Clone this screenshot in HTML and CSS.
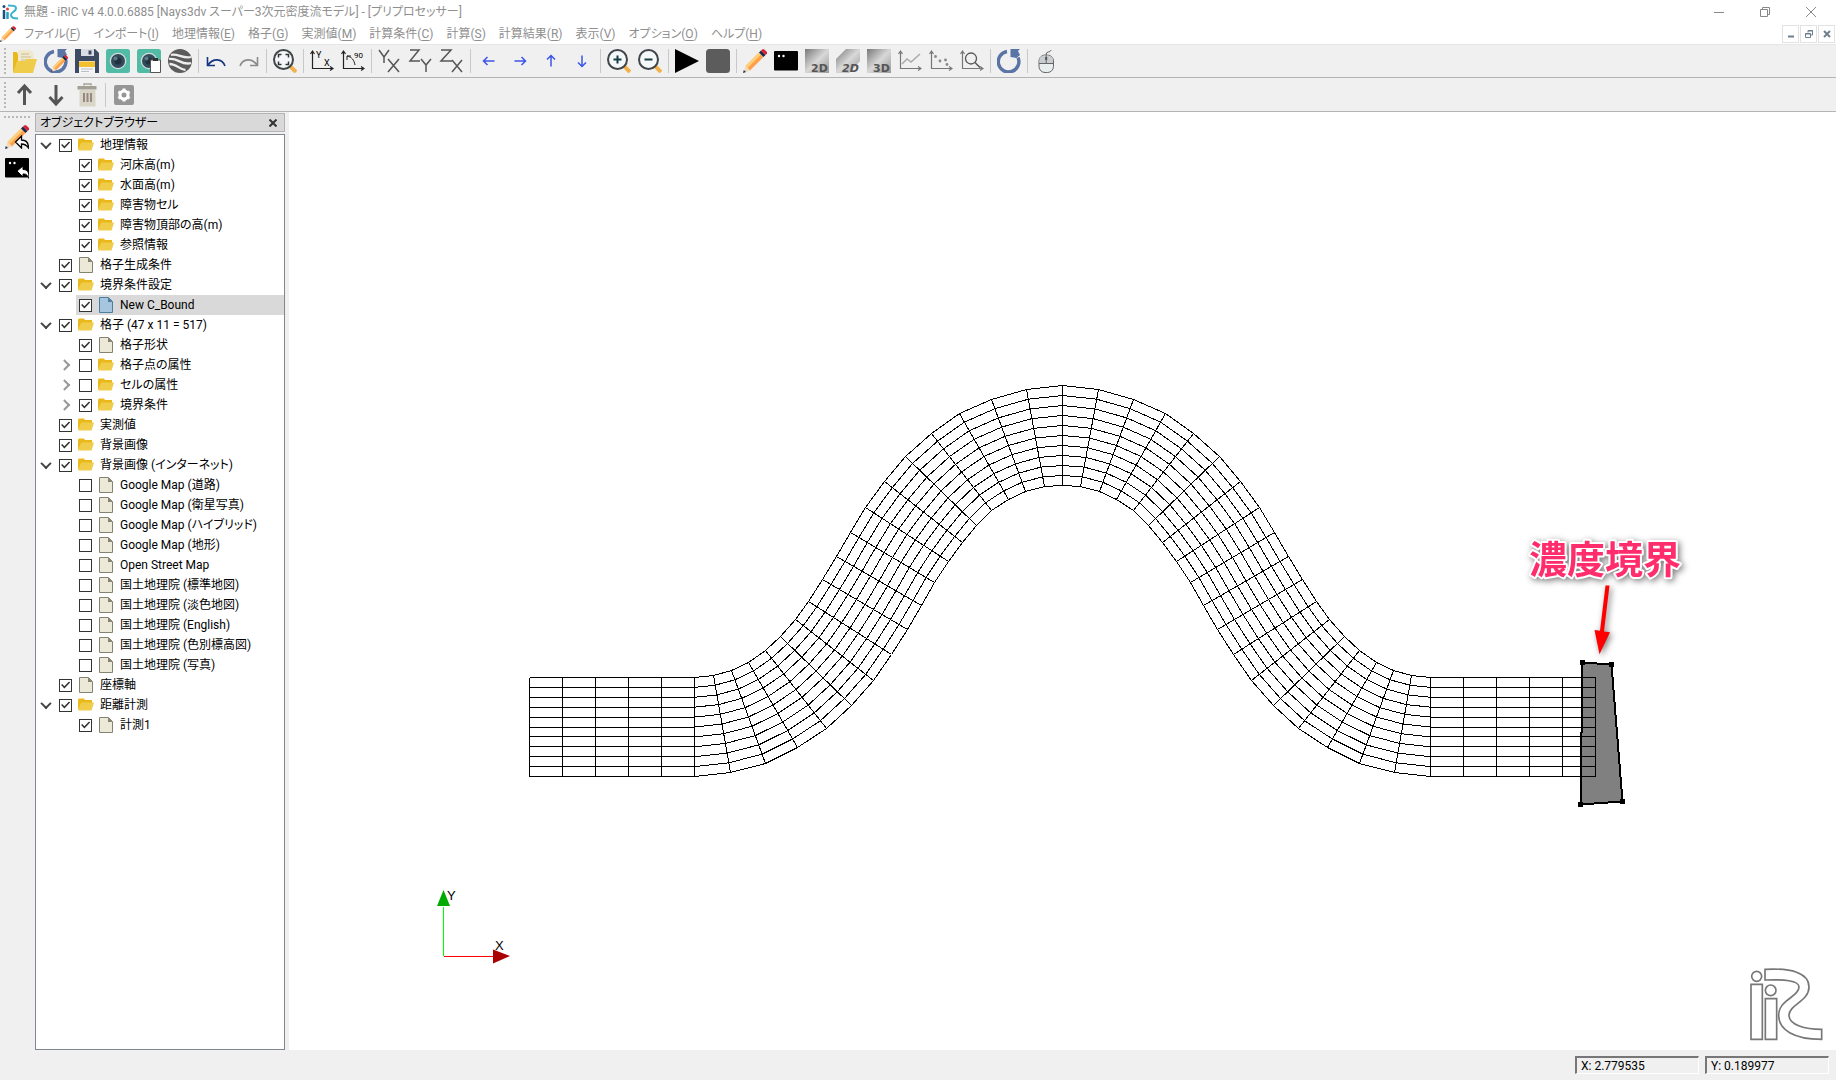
FILE: index.html
```
<!DOCTYPE html>
<html lang="ja">
<head>
  <meta charset="UTF-8">
  <title>無題 - iRIC v4 4.0.0.6885</title>
  <meta name="viewport" content="width=device-width, initial-scale=1.0">
  <link rel="stylesheet" href="styles.css">
</head>
<body>
  <!-- shared icons -->
  <svg class="defs" width="0" height="0" aria-hidden="true">
    <linearGradient id="steel" x1="0" y1="0" x2="1" y2="1">
      <stop offset="0" stop-color="#777"/>
      <stop offset=".5" stop-color="#d8d8d8"/>
      <stop offset="1" stop-color="#999"/>
    </linearGradient>
    <symbol id="folder" viewBox="0 0 16 16">
      <path d="M0 2.500 1 1.500h5l1 1.500h7V6H4L0 13z" fill="#e9b81c"/>
      <path d="M3.200 5.500H16l-2.500 8H0z" fill="#efcd4b"/>
    </symbol>
    <symbol id="file" viewBox="0 0 16 16">
      <path d="M1.500.5h9l4 4v11h-13z" fill="var(--paper, #ece9d8)" stroke="var(--ink, #85826f)"/>
      <path d="M10 .5v4.500h4.500z" fill="var(--ink, #85826f)"/>
    </symbol>
    <symbol id="pencil" viewBox="0 0 24 24">
      <path d="M16 3.500 20.500 8 7 21.500 2.500 17z" fill="#ffa04a"/>
      <path d="M16 3.500 18 5.500 4.500 19 2.500 17z" fill="#ffd07a"/>
      <path d="M2.500 17 7 21.500.5 24z" fill="#f3d9b8"/>
      <path d="M.8 21 3 23 0 24z" fill="#1b3557"/>
      <path d="m16 3.500 2-2L22.500 6l-2 2z" fill="#16294a"/>
      <path d="m18 1.500 1.500-1.300h1.500L24 3v1.500L22.500 6z" fill="#d81f33"/>
    </symbol>
    <symbol id="console" viewBox="0 0 24 24">
      <rect y="2" width="24" height="19.500" rx="1" fill="#000"/>
      <circle cx="5" cy="7" r="1.200" fill="#fff"/>
      <circle cx="9.500" cy="7" r="1.200" fill="#fff"/>
    </symbol>
    <symbol id="refresh" viewBox="0 0 24 24">
      <path d="M10 2.500A10.300 10.300 0 1 0 21 8.500" fill="none" stroke="#5a74a6" stroke-width="3.400"/>
      <path d="M13.500 0H23l-2 2 2 4-3.500 3-6-1z" fill="#5a74a6"/>
    </symbol>
    <symbol id="camera" viewBox="0 0 24 24">
      <rect width="24" height="24" rx="2.500" fill="#52bba6"/>
      <circle cx="12" cy="12" r="8.300" fill="#d5dce0"/>
      <circle cx="12" cy="12" r="7" fill="#324a5a"/>
      <circle cx="12" cy="12" r="3.500" fill="#20323f"/>
      <circle cx="9.500" cy="9.500" r="2" fill="#607887"/>
    </symbol>
    <symbol id="lens" viewBox="0 0 24 24">
      <path d="m17 17 6 6" stroke="#f3b14e" stroke-width="4"/>
      <circle cx="10.500" cy="10.500" r="9.500" fill="#f5f8f8" stroke="#3f4548" stroke-width="2"/>
    </symbol>
    <symbol id="axes" viewBox="0 0 24 24">
      <path d="M2.500 3v16.500H22M.5 5l2-3 2 3M20 17.500l3 2-3 2" fill="none" stroke="currentColor" stroke-width="1.200"/>
    </symbol>
  </svg>

  <header>
    <div class="titlebar">
      <svg class="app-icon" viewBox="0 0 16 16"><g fill="none" stroke-width="2.500"><path d="M2 6v9" stroke="#1b4f82"/><path d="M5.500 8v7" stroke="#27a3c2"/><path d="M6 1.500c5 0 8 0 8 3S9 8 9 11s3 3.500 7 3.500" stroke="#38b2ce" stroke-width="2"/></g><circle cx="2" cy="2.500" r="1.500" fill="#1b4f82"/><circle cx="5.500" cy="5" r="1.500" fill="#e03c3c"/></svg>
      <span class="title">無題 - iRIC v4 4.0.0.6885 [Nays3dv スーパー3次元密度流モデル] - [プリプロセッサー]</span>
      <div class="window-buttons">
        <button aria-label="最小化"><svg viewBox="0 0 10 10"><path d="M0 5.500h10"/></svg></button>
        <button aria-label="元に戻す"><svg viewBox="0 0 10 10"><path d="M.5 2.500h7v7h-7zM2.500 2.500v-2h7v7h-2"/></svg></button>
        <button aria-label="閉じる"><svg viewBox="0 0 10 10"><path d="m0 0 10 10M10 0 0 10"/></svg></button>
      </div>
    </div>

    <nav class="menubar">
      <svg class="menu-icon"><use href="#pencil"/></svg>
      <button>ファイル(<u>F</u>)</button>
      <button>インポート(<u>I</u>)</button>
      <button>地理情報(<u>E</u>)</button>
      <button>格子(<u>G</u>)</button>
      <button>実測値(<u>M</u>)</button>
      <button>計算条件(<u>C</u>)</button>
      <button>計算(<u>S</u>)</button>
      <button>計算結果(<u>R</u>)</button>
      <button>表示(<u>V</u>)</button>
      <button>オプション(<u>O</u>)</button>
      <button>ヘルプ(<u>H</u>)</button>
      <div class="mdi-buttons">
        <button aria-label="子ウィンドウを最小化"><svg viewBox="0 0 8 8"><path d="M1 6.500h6" stroke-width="2"/></svg></button>
        <button aria-label="子ウィンドウを元に戻す"><svg viewBox="0 0 8 8"><path d="M.5 3.500h5v4h-5zM0 4h6M3 2.500V.5h4.500v4.500H6M3 1h5"/></svg></button>
        <button aria-label="子ウィンドウを閉じる"><svg viewBox="0 0 8 8"><path d="m1 1 6 6M7 1 1 7" stroke-width="2"/></svg></button>
      </div>
    </nav>
  </header>

  <div class="toolbar">
    <span class="grip"></span>
    <button aria-label="開く"><svg viewBox="0 0 24 24"><path d="M0 3h4l1 3v17H0z" fill="#e9b81c"/><path d="M5 1h12l4 3v13H5z" fill="#f0e9cf"/><path d="M8 5h8M8 8h10M8 11h10" stroke="#c9bd91"/><path d="M4 12h8l2-2h10l-4 14H0z" fill="#efcd4b"/></svg></button>
    <button aria-label="再読込"><svg viewBox="0 0 24 24"><use href="#refresh"/><use href="#pencil" x="7" y="6" width="17" height="17"/></svg></button>
    <button aria-label="保存"><svg viewBox="0 0 24 24"><path d="M0 0h20l4 4v20H0z" fill="#3d4a63"/><path d="M6 0h13v7H6z" fill="#d9dee3"/><path d="M13.500 1.500h3v4h-3z" fill="#3d4a63"/><path d="M4 12h16v12H4z" fill="#f5f5f5"/><path d="M4 12.500h16v5.500H4z" fill="#f3c02f"/><path d="M6 20h12M6 22.500h8" stroke="#b9bec6"/></svg></button>
    <button aria-label="スナップショット"><svg><use href="#camera"/></svg></button>
    <button aria-label="スナップショットをコピー"><svg viewBox="0 0 24 24"><use href="#camera"/><path d="M13.500 11h10v12.500h-10z" fill="#fff" stroke="#555"/><path d="M16 9h5v3h-5z" fill="#333"/></svg></button>
    <button aria-label="Google Earth"><svg viewBox="0 0 24 24"><circle cx="12" cy="12" r="12" fill="#5c5c5c"/><path d="M3 6c6-2 12 4 20 2M1 10c8-2 13 7 22 4M1.500 15c7 0 11 6 16 6" fill="none" stroke="#eee" stroke-width="2.300"/></svg></button>
    <span class="sep"></span>
    <button aria-label="元に戻す"><svg viewBox="0 0 24 24" fill="none" stroke="#14357f" stroke-width="1.600"><path d="M2.500 8v8.500H10M3 16C8 9 17 9 20 17"/></svg></button>
    <button aria-label="やり直し"><svg viewBox="0 0 24 24" fill="none" stroke="#8b8b8b" stroke-width="1.600"><path d="M21.500 8v8.500H14M21 16C16 9 7 9 4 17"/></svg></button>
    <span class="sep"></span>
    <button aria-label="全体表示"><svg viewBox="0 0 24 24"><use href="#lens"/><path d="M5.500 8.500v-3h3M12.500 5.500h3v3M15.500 12.500v3h-3M8.500 15.500h-3v-3" fill="none" stroke="#333" stroke-width="1.500"/></svg></button>
    <span class="sep"></span>
    <button aria-label="XY軸"><svg viewBox="0 0 24 24" color="#222"><use href="#axes"/><text x="6" y="9" font-size="9">Y</text><text x="14" y="17" font-size="9">X</text></svg></button>
    <button aria-label="90度回転"><svg viewBox="0 0 24 24" color="#222"><use href="#axes"/><path d="M6 7h4M6 7v4M6 7c5 1 7 4 8 9" fill="none" stroke="#222"/><text x="13" y="9" font-size="8">90</text></svg></button>
    <span class="sep"></span>
    <button aria-label="YX"><svg viewBox="0 0 24 24" class="plane"><path d="m1 1 5 7 5-7M6 8v6M10 10l11 13M21 10 10 23"/></svg></button>
    <button aria-label="ZY"><svg viewBox="0 0 24 24" class="plane"><path d="M1 1h9L1 12h10M12 10l5 6 5-6M17 16v7"/></svg></button>
    <button aria-label="ZX"><svg viewBox="0 0 24 24" class="plane"><path d="M1 1h10L1 12h11M12 11l10 12M22 11 12 23"/></svg></button>
    <span class="sep"></span>
    <button aria-label="左へ"><svg viewBox="0 0 24 24" class="move"><path d="M17.500 12h-11M10.500 8l-4 4 4 4"/></svg></button>
    <button aria-label="右へ"><svg viewBox="0 0 24 24" class="move"><path d="M6.500 12h11M13.500 8l4 4-4 4"/></svg></button>
    <button aria-label="上へ"><svg viewBox="0 0 24 24" class="move"><path d="M12 17.500v-11M8 10.500l4-4 4 4"/></svg></button>
    <button aria-label="下へ"><svg viewBox="0 0 24 24" class="move"><path d="M12 6.500v11M8 13.500l4 4 4-4"/></svg></button>
    <span class="sep"></span>
    <button aria-label="拡大"><svg viewBox="0 0 24 24"><use href="#lens"/><path d="M6.500 10.500h8M10.500 6.500v8" stroke="#173c44" stroke-width="2"/></svg></button>
    <button aria-label="縮小"><svg viewBox="0 0 24 24"><use href="#lens"/><path d="M6.500 10.500h8" stroke="#173c44" stroke-width="2"/></svg></button>
    <span class="sep"></span>
    <button aria-label="実行"><svg viewBox="0 0 24 24"><path d="M0 0v24l24-12z"/></svg></button>
    <button aria-label="停止"><svg viewBox="0 0 24 24"><rect width="24" height="24" rx="3.500" fill="#5c5c5c"/></svg></button>
    <span class="sep"></span>
    <button aria-label="プリプロセッサー"><svg><use href="#pencil"/></svg></button>
    <button aria-label="ソルバーコンソール"><svg><use href="#console"/></svg></button>
    <button aria-label="2D"><svg viewBox="0 0 24 24"><path d="M0 0h24v24H0z" fill="url(#steel)"/><text class="dim" x="6" y="23">2D</text></svg></button>
    <button aria-label="2D鳥瞰"><svg viewBox="0 0 24 24"><path d="M10 0h14v12L13 24H0V10z" fill="url(#steel)"/><text class="dim slant" x="6" y="23">2D</text></svg></button>
    <button aria-label="3D"><svg viewBox="0 0 24 24"><path d="M0 0h24v24H0z" fill="url(#steel)"/><text class="dim" x="6" y="23">3D</text></svg></button>
    <button aria-label="グラフ"><svg viewBox="0 0 24 24" color="#777"><use href="#axes"/><path d="m4 15 5-5 4 3 9-8" fill="none" stroke="#aaa" stroke-width="1.500"/></svg></button>
    <button aria-label="散布図"><svg viewBox="0 0 24 24" color="#777"><use href="#axes"/><g fill="#888"><circle cx="6.500" cy="7.500" r="1.400"/><circle cx="11" cy="12" r="1.400"/><circle cx="16.500" cy="11" r="1.400"/><circle cx="18" cy="15.500" r="1.400"/></g></svg></button>
    <button aria-label="検証"><svg viewBox="0 0 24 24" color="#777"><use href="#axes"/><circle cx="11" cy="9.500" r="5.500" fill="none" stroke="#555" stroke-width="1.300"/><path d="m15 13.500 5 5" stroke="#555" stroke-width="1.500"/></svg></button>
    <span class="sep"></span>
    <button aria-label="更新"><svg><use href="#refresh"/></svg></button>
    <span class="sep"></span>
    <button aria-label="マウス"><svg viewBox="0 0 24 24"><rect x="5" y="6" width="14.500" height="17.500" rx="6" fill="#e8eded" stroke="#666"/><path d="M5.500 14v-3c0-3 2-4.500 6.500-4.500S19 8 19 11v3z" fill="#c9cdcf"/><path d="M5 14.500h14.500M12.200 14V5c0-3 4-1 5-4" fill="none" stroke="#666"/><path d="M12.200 8v3" stroke="#555" stroke-width="2"/></svg></button>
  </div>

  <div class="toolbar">
    <span class="grip"></span>
    <button aria-label="上に移動"><svg viewBox="0 0 24 24" fill="none" stroke="#555" stroke-width="3"><path d="M11.500 22V4M5 10l6.500-7 6.500 7"/></svg></button>
    <button aria-label="下に移動"><svg viewBox="0 0 24 24" fill="none" stroke="#555" stroke-width="3"><path d="M12 2v18M5.500 14l6.500 7 6.500-7"/></svg></button>
    <button aria-label="削除" disabled><svg viewBox="0 0 24 24"><path d="M4.500 7h16v16.500h-16z" fill="#d9d6c8"/><path d="M9 2.500V1h7v1.500" fill="none" stroke="#a5a195" stroke-width="1.500"/><path d="M2.500 3h19v3.500h-19z" fill="#a39f92"/><path d="M9 10v9M12.500 10v9M16 10v9" stroke="#96877f" stroke-width="2"/></svg></button>
    <span class="sep"></span>
    <button aria-label="設定" disabled><svg viewBox="0 0 24 24"><rect x="2" y="2" width="20" height="20" rx="2" fill="#969696"/><circle cx="12" cy="12" r="4" fill="none" stroke="#fff" stroke-width="3"/><path d="M12 5.500v2.500M12 16v2.500M6.400 8.700l2.200 1.300M15.400 14l2.200 1.300M6.400 15.300 8.600 14M15.400 10l2.200-1.300" stroke="#fff" stroke-width="3"/></svg></button>
  </div>

  <main>
    <div class="side-tools">
      <span class="grip"></span>
      <button aria-label="プリプロセッサーに戻る"><svg viewBox="0 0 24 24"><use href="#pencil"/><path d="m10.500 17 6-6v4c5 0 7 3 7 8-2-3-4-4-7-4v4z" fill="#fff" stroke="#000" stroke-width="1.300"/></svg></button>
      <button aria-label="コンソールに戻る"><svg viewBox="0 0 24 24"><use href="#console"/><path d="m12 15 6-5v3.500c5 0 6 3 6 9-2-4-3-4.500-6-4.500v3z" fill="#fff" stroke="#000"/></svg></button>
    </div>

    <section class="browser">
      <div class="browser-title">
        <span>オブジェクトブラウザー</span>
        <button aria-label="閉じる"><svg viewBox="0 0 8 8"><path d="m.5.5 7 7M7.500.5l-7 7"/></svg></button>
      </div>
      <ul class="tree">
        <li>
          <div class="row"><button class="twisty open" aria-label="折りたたむ"></button><label><input type="checkbox" checked><svg><use href="#folder"/></svg>地理情報</label></div>
          <ul>
            <li class="row"><label><input type="checkbox" checked><svg><use href="#folder"/></svg>河床高(m)</label></li>
            <li class="row"><label><input type="checkbox" checked><svg><use href="#folder"/></svg>水面高(m)</label></li>
            <li class="row"><label><input type="checkbox" checked><svg><use href="#folder"/></svg>障害物セル</label></li>
            <li class="row"><label><input type="checkbox" checked><svg><use href="#folder"/></svg>障害物頂部の高(m)</label></li>
            <li class="row"><label><input type="checkbox" checked><svg><use href="#folder"/></svg>参照情報</label></li>
          </ul>
        </li>
        <li class="row"><label><input type="checkbox" checked><svg><use href="#file"/></svg>格子生成条件</label></li>
        <li>
          <div class="row"><button class="twisty open" aria-label="折りたたむ"></button><label><input type="checkbox" checked><svg><use href="#folder"/></svg>境界条件設定</label></div>
          <ul>
            <li class="row"><label class="selected"><input type="checkbox" checked><svg><use href="#file"/></svg>New C_Bound</label></li>
          </ul>
        </li>
        <li>
          <div class="row"><button class="twisty open" aria-label="折りたたむ"></button><label><input type="checkbox" checked><svg><use href="#folder"/></svg>格子 (47 x 11 = 517)</label></div>
          <ul>
            <li class="row"><label><input type="checkbox" checked><svg><use href="#file"/></svg>格子形状</label></li>
            <li class="row"><button class="twisty" aria-label="展開"></button><label><input type="checkbox"><svg><use href="#folder"/></svg>格子点の属性</label></li>
            <li class="row"><button class="twisty" aria-label="展開"></button><label><input type="checkbox"><svg><use href="#folder"/></svg>セルの属性</label></li>
            <li class="row"><button class="twisty" aria-label="展開"></button><label><input type="checkbox" checked><svg><use href="#folder"/></svg>境界条件</label></li>
          </ul>
        </li>
        <li class="row"><label><input type="checkbox" checked><svg><use href="#folder"/></svg>実測値</label></li>
        <li class="row"><label><input type="checkbox" checked><svg><use href="#folder"/></svg>背景画像</label></li>
        <li>
          <div class="row"><button class="twisty open" aria-label="折りたたむ"></button><label><input type="checkbox" checked><svg><use href="#folder"/></svg>背景画像 (インターネット)</label></div>
          <ul>
            <li class="row"><label><input type="checkbox"><svg><use href="#file"/></svg>Google Map (道路)</label></li>
            <li class="row"><label><input type="checkbox"><svg><use href="#file"/></svg>Google Map (衛星写真)</label></li>
            <li class="row"><label><input type="checkbox"><svg><use href="#file"/></svg>Google Map (ハイブリッド)</label></li>
            <li class="row"><label><input type="checkbox"><svg><use href="#file"/></svg>Google Map (地形)</label></li>
            <li class="row"><label><input type="checkbox"><svg><use href="#file"/></svg>Open Street Map</label></li>
            <li class="row"><label><input type="checkbox"><svg><use href="#file"/></svg>国土地理院 (標準地図)</label></li>
            <li class="row"><label><input type="checkbox"><svg><use href="#file"/></svg>国土地理院 (淡色地図)</label></li>
            <li class="row"><label><input type="checkbox"><svg><use href="#file"/></svg>国土地理院 (English)</label></li>
            <li class="row"><label><input type="checkbox"><svg><use href="#file"/></svg>国土地理院 (色別標高図)</label></li>
            <li class="row"><label><input type="checkbox"><svg><use href="#file"/></svg>国土地理院 (写真)</label></li>
          </ul>
        </li>
        <li class="row"><label><input type="checkbox" checked><svg><use href="#file"/></svg>座標軸</label></li>
        <li>
          <div class="row"><button class="twisty open" aria-label="折りたたむ"></button><label><input type="checkbox" checked><svg><use href="#folder"/></svg>距離計測</label></div>
          <ul>
            <li class="row"><label><input type="checkbox" checked><svg><use href="#file"/></svg>計測1</label></li>
          </ul>
        </li>
      </ul>
    </section>

    <div class="canvas">
      <svg class="scene">
        <g transform="translate(-289 -112)">
          <path class="bound" d="M1582.500 662.500 1611.500 664.500 1622.500 801.500 1580.500 804.500z"/>
          <path id="mesh" class="mesh"/>
          <path class="handles" d="M1580 660h5v5h-5zM1609 662h5v5h-5zM1620 799h5v5h-5zM1578 802h5v5h-5z"/>
          <g class="note">
            <text x="1529" y="573">濃度境界</text>
            <path d="M1605.500 585.500h4L1604 631.500l6 .8-10.500 22-5-24.300 5.500.7z"/>
          </g>
        </g>
      </svg>

      <svg class="axis" viewBox="0 0 90 90">
        <path d="M10.500 25v49" stroke="#0f0"/>
        <path d="M10.500 8 17 24H4z" fill="#00aa00"/>
        <path d="M11 74.500h50" stroke="#f00"/>
        <path d="M77 74 60 67.500v14z" fill="#a00"/>
        <text x="14" y="18">Y</text>
        <text x="62" y="68">X</text>
      </svg>

      <svg class="logo" viewBox="566 52 225 222">
        <circle cx="589" cy="80" r="15"/>
        <path d="M572 104h34v165h-34z"/>
        <circle cx="631" cy="122" r="16"/>
        <path d="M615 147h34v122h-34z"/>
        <path d="M614 59C690 55 746 68 746 112C746 155 686 165 686 197C686 226 735 239 784 239V269C700 269 655 240 655 197C655 150 716 142 716 112C716 92 670 89 614 91Z"/>
      </svg>
    </div>
  </main>

  <footer>
    <output>X: 2.779535</output>
    <output>Y: 0.189977</output>
  </footer>

  <script src="mesh.js"></script>
</body>
</html>
```

FILE: styles.css
```
:root {
  --chrome: #f0f0f0;
  --line: #b4b4b4;
  --muted: #8f8f8f;
}

* {
  box-sizing: border-box;
}

body {
  margin: 0;
  height: 100vh;
  display: flex;
  flex-direction: column;
  overflow: hidden;
  background: var(--chrome);
  color: #000;
  font: 12px/20px Roboto, "Noto Sans CJK JP", sans-serif;
  font-feature-settings: "palt";
}

button {
  padding: 0;
  border: 0;
  background: none;
  color: inherit;
  font: inherit;
  font-feature-settings: inherit;
}

svg {
  flex: none;
}

.defs {
  position: absolute;
}

/* title and menu */
header {
  background: #fff;
  color: var(--muted);
  border-bottom: 1px solid #e6e6e6;
}

.titlebar {
  display: flex;
  align-items: center;
  height: 24px;
  padding: 0 2px;
}

.app-icon {
  width: 16px;
  height: 16px;
  margin-right: 6px;
}

.title {
  flex: 1;
}

.window-buttons {
  display: flex;
  height: 20px;
}

.window-buttons button {
  width: 46px;
}

.window-buttons svg {
  display: block;
  width: 10px;
  height: 10px;
  margin: auto;
  fill: none;
  stroke: #888;
}

.menubar {
  display: flex;
  align-items: center;
  gap: 13px;
  height: 20px;
  white-space: nowrap;
}

.menu-icon {
  width: 16px;
  height: 16px;
  margin-right: -5px;
}

.menubar u {
  text-underline-offset: 2px;
}

.mdi-buttons {
  display: flex;
  gap: 1px;
  margin-left: auto;
  padding-right: 1px;
}

.mdi-buttons button {
  width: 17px;
  height: 18px;
  border: 1px solid #e2e2e2;
}

.mdi-buttons svg {
  display: block;
  width: 8px;
  height: 8px;
  margin: auto;
  fill: none;
  stroke: #6f7f8d;
}

/* toolbars */
.toolbar {
  display: flex;
  align-items: center;
  gap: 7px;
  height: 33px;
  padding-left: 4px;
  border-bottom: 1px solid var(--line);
}

.toolbar + .toolbar {
  height: 34px;
}

.toolbar svg {
  overflow: visible;
}

.toolbar button,
.toolbar button svg,
.side-tools button,
.side-tools button svg {
  display: block;
  width: 24px;
  height: 24px;
}

.toolbar .grip {
  width: 2px;
  height: 26px;
  background: repeating-linear-gradient(#b8b8b8 0 2px, transparent 2px 4px);
}

.sep {
  width: 1px;
  height: 24px;
  margin: 0 -1px;
  background: #c8c8c8;
}

.plane {
  fill: none;
  stroke: #555;
  stroke-width: 1.5;
}

.move {
  fill: none;
  stroke: #3c55e8;
  stroke-width: 1.5;
}

.dim {
  font: bold 11px "DejaVu Sans", sans-serif;
  fill: #555;
}

.slant {
  font-style: italic;
}

/* work area */
main {
  display: flex;
  flex: 1;
  min-height: 0;
}

.side-tools {
  display: flex;
  flex-direction: column;
  align-items: center;
  gap: 7px;
  width: 34px;
  margin-right: 1px;
  padding-top: 4px;
}

.side-tools .grip {
  width: 26px;
  height: 2px;
  background: repeating-linear-gradient(90deg, #b8b8b8 0 2px, transparent 2px 4px);
}

.browser {
  display: flex;
  flex-direction: column;
  gap: 2px;
  width: 250px;
  margin-right: 4px;
  padding-top: 1px;
}

.browser-title {
  display: flex;
  align-items: center;
  justify-content: space-between;
  height: 19px;
  padding: 0 7px 0 4px;
  background: #d9d9d9;
  border: 1px solid var(--line);
}

.browser-title svg {
  display: block;
  width: 8px;
  height: 8px;
  stroke: #333;
  stroke-width: 2;
}

ul {
  margin: 0;
  padding: 0 0 0 20px;
  list-style: none;
}

.tree {
  flex: 1;
  padding: 0;
  background: #fff;
  border: 1px solid #82878f;
}

.row {
  display: flex;
  height: 20px;
  padding-left: 20px;
  white-space: nowrap;
}

.row label {
  display: flex;
  flex: 1;
  align-items: center;
  padding-left: 3px;
}

.row label svg {
  width: 16px;
  height: 16px;
  margin: 0 6px;
}

.selected {
  --paper: #a5c6de;
  --ink: #4f7d9e;
  background: #d9d9d9;
}

.twisty {
  display: grid;
  place-items: center;
  width: 20px;
  margin-left: -20px;
}

.twisty::before {
  content: "";
  width: 6px;
  height: 6px;
  border: solid #999;
  border-width: 2px 2px 0 0;
  transform: rotate(45deg) translate(-1px, 1px);
}

.twisty.open::before {
  border-color: #444;
  transform: rotate(135deg) translate(-1px, 1px);
}

input[type="checkbox"] {
  appearance: none;
  width: 13px;
  height: 13px;
  margin: 0;
  border: 1px solid #333;
  background: #fff;
}

input[type="checkbox"]:checked::before {
  content: "";
  display: block;
  width: 11px;
  height: 11px;
  background: #333;
  clip-path: polygon(10% 50%, 20% 42%, 40% 62%, 82% 18%, 92% 28%, 40% 82%);
}

.canvas {
  position: relative;
  flex: 1;
  background: #fff;
}

.scene {
  display: block;
  width: 100%;
  height: 100%;
}

.mesh {
  fill: none;
  stroke: #000;
  shape-rendering: crispEdges;
}

.bound {
  fill: #808080;
  stroke: #000;
  stroke-width: 2;
  shape-rendering: crispEdges;
}

.note {
  filter: drop-shadow(2px 2px 3px rgba(0, 0, 0, 0.5));
}

.note text {
  font: bold 38px "Noto Sans CJK JP", sans-serif;
  fill: #ff2d6b;
  stroke: #fff;
  stroke-width: 4;
  stroke-linejoin: round;
  paint-order: stroke;
}

.note path {
  fill: #f00;
}

.axis {
  position: absolute;
  left: 144px;
  bottom: 78px;
  width: 90px;
  height: 90px;
  font: 13px "Liberation Sans", sans-serif;
}

.logo {
  position: absolute;
  right: 12px;
  bottom: 9px;
  width: 75px;
  height: 74px;
  fill: none;
  stroke: #777;
  stroke-width: 5;
}

/* status bar */
footer {
  display: flex;
  justify-content: flex-end;
  align-items: center;
  gap: 6px;
  height: 30px;
  padding-right: 7px;
}

output {
  width: 124px;
  height: 18px;
  padding-left: 4px;
  border: 1px solid #fff;
  border-top: 2px solid #777;
  border-left: 2px solid #777;
  line-height: 16px;
}
```

FILE: mesh.js
```
// Left half of the channel, one [outer x, outer y, inner x, inner y] per cross section.
// The right half is the mirror image about the bend apex.
const sections = [
  [529.5, 677.5, 529.5, 776.5],
  [562.5, 677.5, 562.5, 776.5],
  [595.5, 677.5, 595.5, 776.5],
  [628.5, 677.5, 628.5, 776.5],
  [661.5, 677.5, 661.5, 776.5],
  [694.5, 677.5, 694.5, 776.5],
  [713.5, 675.5, 730.5, 772.5],
  [731.5, 670.5, 765.5, 763.5],
  [748.5, 662.5, 797.5, 747.5],
  [765.5, 650.5, 826.5, 728.5],
  [780.5, 636.5, 851.5, 705.5],
  [795.5, 619.5, 873.5, 680.5],
  [808.5, 601.5, 891.5, 654.5],
  [822.5, 579.5, 907.5, 629.5],
  [836.5, 556.5, 921.5, 605.5],
  [850.5, 532.5, 934.5, 582.5],
  [865.5, 507.5, 948.5, 561.5],
  [884.5, 481.5, 962.5, 542.5],
  [905.5, 456.5, 976.5, 525.5],
  [931.5, 433.5, 991.5, 510.5],
  [959.5, 413.5, 1008.5, 499.5],
  [991.5, 399.5, 1025.5, 491.5],
  [1026.5, 389.5, 1044.5, 486.5],
  [1062.5, 385.5, 1062.5, 485.5]
];
const apex = 1062.5;
const cells = 10;

const mirrored = sections.slice(0, -1).reverse()
  .map(([ax, ay, bx, by]) => [2 * apex - ax, ay, 2 * apex - bx, by]);
const all = sections.concat(mirrored);

let d = "";
for (const [ax, ay, bx, by] of all) {
  d += `M${ax} ${ay}L${bx} ${by}`;
}
for (let j = 0; j <= cells; j++) {
  const t = j / cells;
  d += "M" + all.map(([ax, ay, bx, by]) =>
    `${ax + (bx - ax) * t} ${ay + (by - ay) * t}`).join("L");
}
document.getElementById("mesh").setAttribute("d", d);
```
